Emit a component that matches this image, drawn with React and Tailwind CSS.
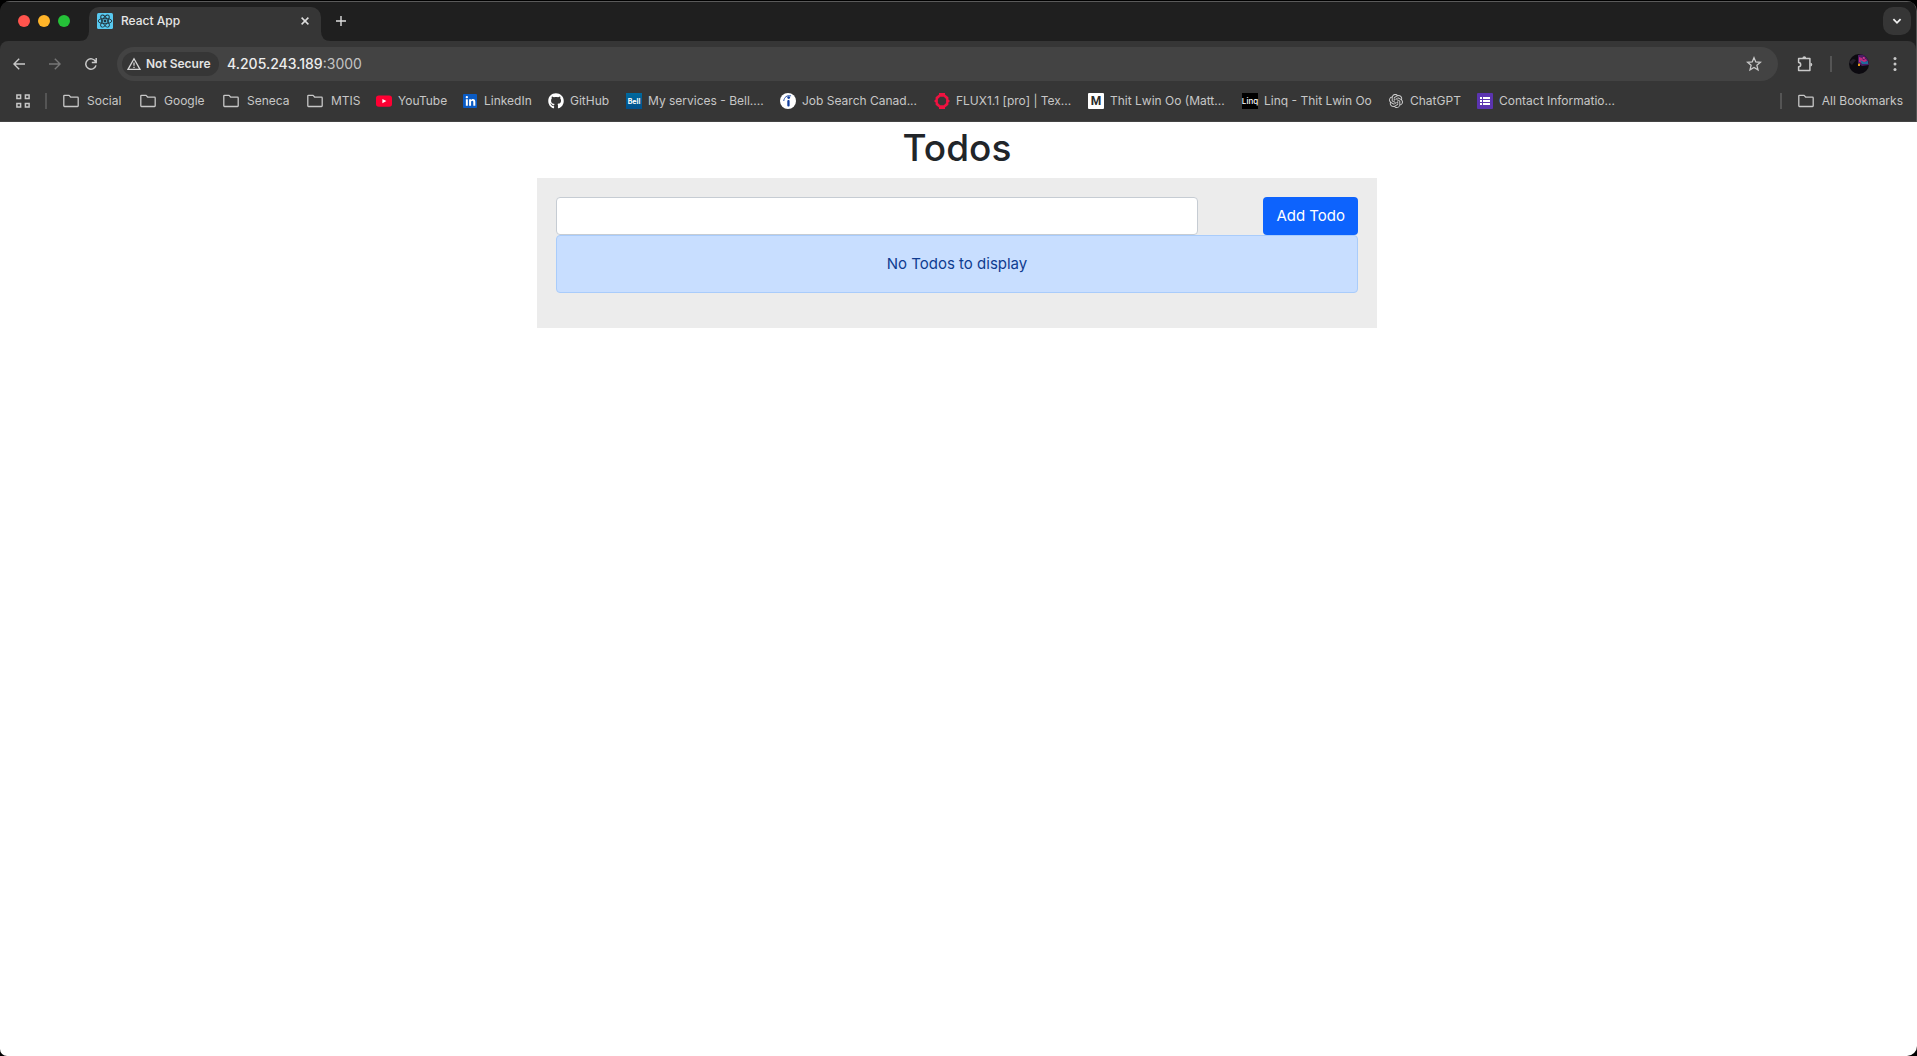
import { FaGithub, FaLinkedinIn } from "react-icons/fa";
import { SiOpenai } from "react-icons/si";

function FolderIcon() {
  return (
    <svg className="h-4 w-4 shrink-0" viewBox="0 0 16 16" fill="none" stroke="#c7c7c7" strokeWidth="1.3" strokeLinejoin="round" aria-hidden="true">
      <path d="M.8 3.1q0-.7.7-.7h4.6l1.7 1.8h6.7q.7 0 .7.7v7.9q0 .7-.7.7h-13q-.7 0-.7-.7Z" />
    </svg>
  );
}

function AppsIcon() {
  return (
    <svg className="h-[14px] w-[14px]" viewBox="0 0 14 14" fill="none" stroke="#c7c7c7" strokeWidth="1.5" aria-hidden="true">
      <path d="M.9.9h3.7v3.7H.9ZM9.4.9h3.7v3.7H9.4ZM.9 9.4h3.7v3.7H.9ZM9.4 9.4h3.7v3.7H9.4Z" />
    </svg>
  );
}

function ReactFavicon() {
  return (
    <svg className="h-4 w-4 shrink-0" viewBox="0 0 16 16" aria-hidden="true">
      <rect width="16" height="16" rx="1.5" fill="#58c9f0" />
      <g fill="none" stroke="#20333d" strokeWidth="0.9">
        <ellipse cx="8" cy="8" rx="6.8" ry="2.7" />
        <ellipse cx="8" cy="8" rx="6.8" ry="2.7" transform="rotate(60 8 8)" />
        <ellipse cx="8" cy="8" rx="6.8" ry="2.7" transform="rotate(120 8 8)" />
      </g>
      <circle cx="8" cy="8" r="1.4" fill="#20333d" />
    </svg>
  );
}

function YouTubeIcon() {
  return (
    <svg className="h-4 w-4 shrink-0" viewBox="0 0 16 16" aria-hidden="true">
      <rect y="2.4" width="16" height="11.4" rx="2.8" fill="#ff0033" />
      <path d="M6.4 5.9v4.4L10.4 8.1Z" fill="#fff" />
    </svg>
  );
}

function LinkedInIcon() {
  return (
    <span className="flex h-4 w-4 shrink-0 items-center justify-center">
      <span className="flex h-[14px] w-[14px] items-center justify-center rounded-[1px] bg-[#0a5bc4]">
        <FaLinkedinIn className="h-[11px] w-[11px] text-white" aria-hidden="true" />
      </span>
    </span>
  );
}

function GitHubIcon() {
  return <FaGithub className="h-4 w-4 shrink-0 text-white" aria-hidden="true" />;
}

function BellIcon() {
  return (
    <span className="flex h-4 w-4 shrink-0 items-center justify-center bg-linear-to-b from-[#006a9e] to-[#00508c] text-[7px] leading-none font-bold text-white">
      Bell
    </span>
  );
}

function IndeedIcon() {
  return (
    <svg className="h-4 w-4 shrink-0" viewBox="0 0 16 16" aria-hidden="true">
      <circle cx="8" cy="8" r="8" fill="#fff" />
      <circle cx="8.7" cy="4.6" r="1.4" fill="#123f9e" />
      <rect x="7.3" y="6.9" width="2.3" height="6.6" rx="1" fill="#123f9e" />
      <path d="M3.8 7.6C4.2 4.3 6.8 1.9 10.7 2.8" fill="none" stroke="#123f9e" strokeWidth="0.9" strokeLinecap="round" />
    </svg>
  );
}

function FluxIcon() {
  return (
    <svg className="h-4 w-4 shrink-0" viewBox="0 0 16 16" aria-hidden="true">
      <path
        d="M5 0h6v1.6l3.4 2.6v2.2L16 8l-1.6 1.6v2.2L11 14.4V16H5v-1.6L1.6 11.8V9.6L0 8l1.6-1.6V4.2L5 1.6ZM6.2 3.8L3.9 6.1v3.8l2.3 2.3h3.6l2.3-2.3V6.1L9.8 3.8Z"
        fill="#ef1240"
        fillRule="evenodd"
      />
    </svg>
  );
}

function MIcon() {
  return (
    <span className="flex h-4 w-4 shrink-0 items-center justify-center rounded-[1px] bg-white font-['Roboto',sans-serif] text-[12px] leading-none font-bold text-[#2b2b2b]">
      M
    </span>
  );
}

function LinqIcon() {
  return (
    <span className="flex h-4 w-4 shrink-0 items-center justify-center bg-black text-[8px] leading-none font-medium text-white">
      Linq
    </span>
  );
}

function ChatGPTIcon() {
  return (
    <span className="flex h-4 w-4 shrink-0 items-center justify-center">
      <SiOpenai className="h-[14px] w-[14px] text-[#d0d0d0]" aria-hidden="true" />
    </span>
  );
}

function FormIcon() {
  return (
    <svg className="h-4 w-4 shrink-0" viewBox="0 0 16 16" aria-hidden="true">
      <rect width="16" height="16" rx="1" fill="#5b34b0" />
      <path d="M3 4h2v2H3ZM6 4h7v2H6ZM3 7h2v2H3ZM6 7h7v2H6ZM3 10h2v2H3ZM6 10h7v2H6Z" fill="#fff" />
    </svg>
  );
}

const folders = [
  { label: "Social", width: "w-[77px]" },
  { label: "Google", width: "w-[83px]" },
  { label: "Seneca", width: "w-[84px]" },
  { label: "MTIS", width: "w-[69px]" },
];

const links = [
  { label: "YouTube", Icon: YouTubeIcon, width: "w-[86px]" },
  { label: "LinkedIn", Icon: LinkedInIcon, width: "w-[86px]" },
  { label: "GitHub", Icon: GitHubIcon, width: "w-[78px]" },
  { label: "My services - Bell....", Icon: BellIcon, width: "w-[154px]" },
  { label: "Job Search Canad...", Icon: IndeedIcon, width: "w-[154px]" },
  { label: "FLUX1.1 [pro] | Tex...", Icon: FluxIcon, width: "w-[154px]" },
  { label: "Thit Lwin Oo (Matt...", Icon: MIcon, width: "w-[154px]" },
  { label: "Linq - Thit Lwin Oo", Icon: LinqIcon, width: "w-[146px]" },
  { label: "ChatGPT", Icon: ChatGPTIcon, width: "w-[89px]" },
  { label: "Contact Informatio...", Icon: FormIcon, width: "w-[154px]" },
];

function TabFlare({ flip }) {
  return (
    <svg className="h-[10px] w-[10px] self-end text-[#363636]" viewBox="0 0 10 10" aria-hidden="true">
      <path d={flip ? "M0 0Q0 10 10 10H0Z" : "M10 0Q10 10 0 10H10Z"} fill="currentColor" />
    </svg>
  );
}

function TabStrip() {
  return (
    <div className="flex h-10 items-end border-t border-[#5a5a5a] bg-[#1f1f1f]">
      <div className="flex h-10 w-[79px] items-center gap-2 pl-[18px]">
        <span className="h-3 w-3 rounded-full bg-[#ff544d]" />
        <span className="h-3 w-3 rounded-full bg-[#ffb429]" />
        <span className="h-3 w-3 rounded-full bg-[#25c138]" />
      </div>
      <TabFlare />
      <div className="flex h-[34px] w-[232px] items-center rounded-t-[10px] bg-[#363636] pr-2 pb-1.5 pl-2">
        <ReactFavicon />
        <span className="ml-2 flex-1 text-[12px] leading-4 font-medium text-[#e6e6e6]">React App</span>
        <button type="button" aria-label="Close tab" className="flex h-4 w-4 items-center justify-center">
          <svg className="h-2 w-2" viewBox="0 0 8 8" stroke="#dedede" strokeWidth="1.5" aria-hidden="true">
            <path d="M.6.6l6.8 6.8M7.4.6L.6 7.4" />
          </svg>
        </button>
      </div>
      <TabFlare flip />
      <button type="button" aria-label="New tab" className="flex h-10 w-5 items-center justify-center">
        <svg className="h-[10px] w-[10px]" viewBox="0 0 10 10" stroke="#dedede" strokeWidth="1.4" aria-hidden="true">
          <path d="M5 0v10M0 5h10" />
        </svg>
      </button>
      <button type="button" aria-label="Search tabs" className="mr-[5px] mb-1.5 ml-auto flex h-7 w-7 items-center justify-center rounded-[10px] bg-[#363636]">
        <svg className="h-[10px] w-[10px]" viewBox="0 0 10 10" fill="none" stroke="#f0f0f0" strokeWidth="1.8" aria-hidden="true">
          <path d="M1.4 3.2L5 6.8l3.6-3.6" />
        </svg>
      </button>
    </div>
  );
}

function Toolbar() {
  return (
    <div className="flex h-[46px] items-center pr-[5px] pl-px">
      <button type="button" aria-label="Back" className="flex h-8 w-9 items-center justify-center">
        <svg className="h-3 w-3" viewBox="0 0 12 12" fill="none" stroke="#c9c9c9" strokeWidth="1.4" aria-hidden="true">
          <path d="M12 6H1M6.2.7L.9 6l5.3 5.3" />
        </svg>
      </button>
      <button type="button" aria-label="Forward" className="flex h-8 w-9 items-center justify-center">
        <svg className="h-3 w-3" viewBox="0 0 12 12" fill="none" stroke="#777" strokeWidth="1.4" aria-hidden="true">
          <path d="M0 6h11M5.8.7L11.1 6l-5.3 5.3" />
        </svg>
      </button>
      <button type="button" aria-label="Reload" className="flex h-8 w-9 items-center justify-center">
        <svg className="h-3 w-3" viewBox="0 0 12 12" fill="none" stroke="#c9c9c9" strokeWidth="1.5" aria-hidden="true">
          <path d="M11 7.4A5.2 5.2 0 1 1 10.6 3.6M11.2 0v4.5H6.8" />
        </svg>
      </button>
      <div className="ml-2 flex h-[34px] min-w-0 flex-1 items-center rounded-full bg-[#434343] pl-[5px]">
        <button type="button" className="flex h-6 w-[97px] items-center gap-[5px] rounded-full bg-[#363636] pl-[5px] text-[12px] leading-4 font-semibold whitespace-nowrap text-[#e3e3e3]">
          <svg className="h-[14px] w-[14px]" viewBox="0 0 14 14" fill="none" stroke="#d5d5d5" strokeWidth="1.3" aria-hidden="true">
            <path d="M7 1.8l6 10.6H1ZM7 5.6v3.2M7 9.8v1.3" />
          </svg>
          Not Secure
        </button>
        <div className="ml-2 flex-1 text-[14px] leading-5 font-medium text-[#ededed]">
          4.205.243.189<span className="font-normal text-[#c2c2c2]">:3000</span>
        </div>
        <button type="button" aria-label="Bookmark this tab" className="mr-4 flex h-4 w-4 items-center justify-center">
          <svg className="h-4 w-4" viewBox="0 0 16 16" fill="none" stroke="#c9c9c9" strokeWidth="1.3" aria-hidden="true">
            <path d="M8 1.7l1.8 4.2 4.6.4-3.5 3 1.1 4.5L8 11.4l-4 2.4 1.1-4.5-3.5-3 4.6-.4Z" />
          </svg>
        </button>
      </div>
      <button type="button" aria-label="Extensions" className="ml-[19px] flex h-4 w-4 items-center justify-center">
        <svg className="h-4 w-4" viewBox="0 0 16 16" aria-hidden="true">
          <path d="M1.6 2.6h11.3v12H1.6v-3.8C4.4 10.6 4.4 6.8 1.6 6.6Z" fill="none" stroke="#c9c9c9" strokeWidth="1.5" strokeLinejoin="round" />
          <path d="M5.4 2.2a1.9 1.9 0 0 1 3.8 0ZM13.4 6.7a1.9 1.9 0 0 1 0 3.8Z" fill="#c9c9c9" />
        </svg>
      </button>
      <span className="mx-[17px] h-4 w-0.5 bg-[#555]" />
      <button type="button" aria-label="Profile" className="h-5 w-5 overflow-hidden rounded-full">
        <svg className="h-5 w-5" viewBox="0 0 20 20" aria-hidden="true">
          <rect width="20" height="20" fill="#0c0a10" />
          <path d="M9 1l6-1 5 6v5l-7 1-4-3Z" fill="#4b1c63" />
          <path d="M10 3l3 1 1 2 3-1 1 2-4 2-4-1Z" fill="#c12a7e" />
          <path d="M11 6l4 2 4-1v3l-6 0Z" fill="#1e6c9c" />
          <path d="M14 3l2 .5-.5 1.5-2-.5Z" fill="#e83c8f" />
          <rect x="9" y="9.6" width="2" height="2.4" fill="#e39b1d" />
          <path d="M0 8l4-3 3 1-4 5Z" fill="#24202b" />
        </svg>
      </button>
      <button type="button" aria-label="Menu" className="ml-2.5 flex h-8 w-8 items-center justify-center">
        <svg className="h-4 w-4" viewBox="0 0 16 16" fill="#c9c9c9" aria-hidden="true">
          <circle cx="8" cy="2.6" r="1.5" />
          <circle cx="8" cy="8" r="1.5" />
          <circle cx="8" cy="13.4" r="1.5" />
        </svg>
      </button>
    </div>
  );
}

function BookmarksBar() {
  return (
    <nav aria-label="Bookmarks" className="flex h-[34px] items-center pb-[6px] pl-4 text-[12px] leading-4 whitespace-nowrap text-[#c7c7c7]">
      <button type="button" aria-label="Apps">
        <AppsIcon />
      </button>
      <span className="mr-4 ml-[15px] h-4 w-0.5 bg-[#555]" />
      <div className="flex flex-1">
        {folders.map(({ label, width }) => (
          <button key={label} type="button" className={`flex shrink-0 items-center gap-2 ${width}`}>
            <FolderIcon />
            {label}
          </button>
        ))}
        {links.map(({ label, Icon, width }) => (
          <a key={label} href="#" className={`flex shrink-0 items-center gap-1.5 ${width}`}>
            <Icon />
            {label}
          </a>
        ))}
      </div>
      <span className="mr-4 h-4 w-0.5 bg-[#555]" />
      <button type="button" className="mr-[13px] flex items-center gap-2">
        <FolderIcon />
        All Bookmarks
      </button>
    </nav>
  );
}

function TodoApp() {
  return (
    <main className="flex-1 bg-white pr-[19px] pl-4 text-[#212529]">
      <div className="mx-auto max-w-[840px]">
        <h1 className="mb-1 text-center text-[37px] leading-[52px] font-medium">Todos</h1>
        <section className="bg-[#ececec] px-[19px] pt-[19px] pb-[35px]">
          <form className="flex items-start justify-between" onSubmit={(e) => e.preventDefault()}>
            <input
              type="text"
              aria-label="New todo"
              className="h-[38px] w-4/5 rounded border border-[#c6ccd3] bg-white px-3 text-[15px] outline-none"
            />
            <button type="submit" className="h-[38px] rounded bg-[#0d63fd] px-[13px] text-[15px] leading-6 text-white">
              Add Todo
            </button>
          </form>
          <div role="alert" className="rounded border border-[#a9ccfb] bg-[#c8deff] p-4 text-center text-[15px] leading-6 text-[#0f3c90]">
            No Todos to display
          </div>
        </section>
      </div>
    </main>
  );
}

export default function App() {
  return (
    <div className="min-h-screen bg-black font-['Inter','Liberation_Sans',sans-serif]">
      <div className="flex min-h-screen flex-col overflow-hidden rounded-br-[10px] rounded-bl-[7px] border-t border-black">
        <header className="overflow-hidden rounded-t-[10px] border-r border-[#555] bg-[#1f1f1f]">
          <TabStrip />
          <div className="rounded-t-[8px] border-b border-[#454545] bg-[#363636]">
            <Toolbar />
            <BookmarksBar />
          </div>
        </header>
        <TodoApp />
      </div>
    </div>
  );
}
